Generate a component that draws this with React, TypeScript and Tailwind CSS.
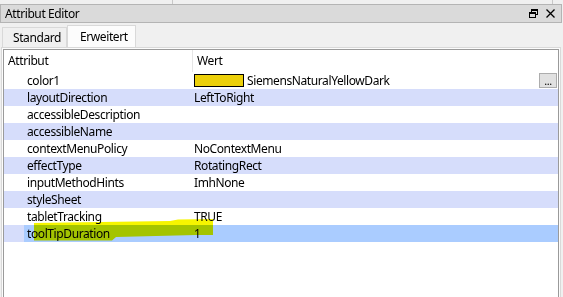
import React from "react";

const rows: { name: string; value?: string; swatch?: boolean }[] = [
  { name: "color1", value: "SiemensNaturalYellowDark", swatch: true },
  { name: "layoutDirection", value: "LeftToRight" },
  { name: "accessibleDescription" },
  { name: "accessibleName" },
  { name: "contextMenuPolicy", value: "NoContextMenu" },
  { name: "effectType", value: "RotatingRect" },
  { name: "inputMethodHints", value: "ImhNone" },
  { name: "styleSheet" },
  { name: "tabletTracking", value: "TRUE" },
  { name: "toolTipDuration", value: "1" },
];

function FloatIcon() {
  return (
    <svg width="9" height="9" viewBox="0 0 9 9" className="block">
      <rect x="2.5" y="0.5" width="6" height="5" fill="none" stroke="#000" />
      <rect x="2" y="0" width="7" height="2" fill="#000" />
      <rect x="0.5" y="3.5" width="6" height="5" fill="#dadada" stroke="#000" />
      <rect x="0" y="3" width="7" height="2" fill="#000" />
    </svg>
  );
}

function CloseIcon() {
  return (
    <svg width="9" height="9" viewBox="0 0 9 9" className="block">
      <path d="M0.5 0.5 L8.5 8.5 M8.5 0.5 L0.5 8.5" stroke="#000" strokeWidth="1.3" />
    </svg>
  );
}

export default function App() {
  return (
    <div
      className="relative w-[563px] h-[297px] overflow-hidden bg-[#f0f0f0] text-[12px] tracking-[-0.4px] text-black"
      style={{ fontFamily: '"Noto Sans", "Open Sans", sans-serif' }}
    >
      {/* strip of the widget above */}
      <div className="flex h-[4px]">
        <div className="w-[173px] border-r border-[#c8c8c8]" />
        <div className="w-[380px] border-r border-[#c8c8c8]" />
      </div>

      {/* dock title bar */}
      <div className="flex items-center h-[19px] w-[562px] border border-[#b4b4b4] bg-[#dadada] pl-[4px] pr-[6px]">
        <span className="leading-none">Attribut Editor</span>
        <div className="ml-auto flex items-center gap-[8px]">
          <FloatIcon />
          <CloseIcon />
        </div>
      </div>

      {/* tabs */}
      <div className="flex items-end h-[24px] pl-[2px]">
        <div className="flex items-center h-[20px] w-[65px] border border-b-0 border-[#d9d9d9] bg-[#f0f0f0] pl-[10px]">
          Standard
        </div>
        <div className="flex items-center h-[22px] w-[69px] border border-b-0 border-[#d9d9d9] bg-[#fcfcfc] pl-[12px]">
          Erweitert
        </div>
      </div>

      {/* pane */}
      <div className="ml-[1px] w-[560px] h-[260px] border border-b-0 border-[#d9d9d9] bg-[#fcfcfc] pt-[1px] pl-[1px]">
        <div className="relative w-[556px] h-full border border-b-0 border-[#9a9a9a] bg-white">
          {/* header */}
          <div className="flex h-[22px] items-center">
            <div className="w-[188px] pl-[4px]">Attribut</div>
            <div className="self-stretch border-l border-[#e5e5e5] pl-[4px] flex items-center">Wert</div>
          </div>

          {rows.map((r, i) => {
            const selected = r.name === "toolTipDuration";
            const alt = i % 2 === 1;
            return (
              <div
                key={r.name}
                className={`flex h-[17px] items-center ${alt ? "bg-[#d6ddfb]" : "bg-white"}`}
              >
                <div className="w-[20px] self-stretch" />
                <div
                  className={`flex flex-1 self-stretch items-center ${selected ? "bg-[#aaccff]" : ""}`}
                >
                  <div className="w-[168px] pl-[3px]">{r.name}</div>
                  <div className="flex flex-1 items-center pl-[2px]">
                    {r.swatch && (
                      <span className="mr-[3px] h-[13px] w-[50px] border border-black bg-[#ecd00a]" />
                    )}
                    <span>{r.value}</span>
                    {r.swatch && (
                      <span className="ml-auto mr-[1px] flex h-[15px] w-[18px] items-end justify-center border border-[#adadad] bg-[#e1e1e1] text-[11px] leading-[13px]">
                        ...
                      </span>
                    )}
                  </div>
                </div>
              </div>
            );
          })}
        </div>
      </div>

      {/* highlighter stroke over toolTipDuration */}
      <svg
        className="absolute left-0 top-0 pointer-events-none mix-blend-multiply"
        width="563"
        height="297"
      >
        <path
          d="M34 223 L100 222 L170 221 L178 219.5 L213 219 L213 235 L196 235 L116 237 L112 240.5 L34 240.5 Z"
          fill="#f6f500"
        />
      </svg>
    </div>
  );
}
